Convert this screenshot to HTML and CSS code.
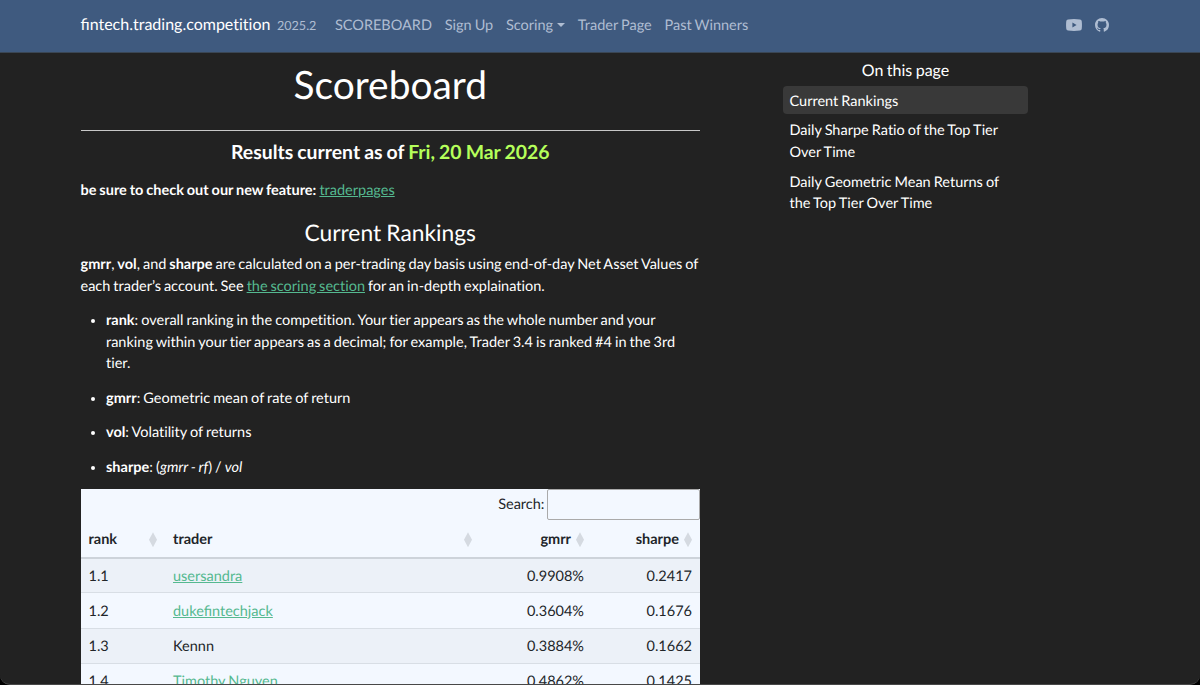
FILE: index.html
```html
<!DOCTYPE html>
<html lang="en">
<head>
<meta charset="utf-8">
<title>Scoreboard</title>
<link rel="stylesheet" href="styles.css">
</head>
<body>
<nav class="navbar">
  <a class="brand"><span class="liga">fintech</span>.trading.competition</a>
  <small class="version">2025.2</small>
  <ul class="nav">
    <li>SCOREBOARD</li>
    <li>Sign Up</li>
    <li>Scoring<span class="caret"></span></li>
    <li>Trader Page</li>
    <li>Past Winners</li>
  </ul>
  <div class="social">
    <svg width="16" height="12" viewBox="0 0 16 12"><path fill-rule="evenodd" d="M2 .4Q8-.2 14 .4Q15.5.6 15.7 2Q16.2 6 15.7 10Q15.5 11.4 14 11.6Q8 12.2 2 11.6Q.5 11.4.3 10Q-.2 6 .3 2Q.5.6 2 .4ZM6.4 3.6V8.4L10.6 6Z"/></svg>
    <svg width="14" height="14" viewBox="0 0 16 16"><path d="M8 0C3.58 0 0 3.58 0 8c0 3.54 2.29 6.53 5.47 7.59.4.07.55-.17.55-.38 0-.19-.01-.82-.01-1.49-2.01.37-2.53-.49-2.69-.94-.09-.23-.48-.94-.82-1.13-.28-.15-.68-.52-.01-.53.63-.01 1.08.58 1.23.82.72 1.21 1.87.87 2.33.66.07-.52.28-.87.51-1.07-1.78-.2-3.64-.89-3.64-3.95 0-.87.31-1.59.82-2.15-.08-.2-.36-1.02.08-2.12 0 0 .67-.21 2.2.82.64-.18 1.32-.27 2-.27s1.36.09 2 .27c1.53-1.04 2.2-.82 2.2-.82.44 1.1.16 1.92.08 2.12.51.56.82 1.27.82 2.15 0 3.07-1.87 3.75-3.65 3.95.29.25.54.73.54 1.48 0 1.07-.01 1.93-.01 2.2 0 .21.15.46.55.38A8.01 8.01 0 0 0 16 8c0-4.42-3.58-8-8-8Z"/></svg>
  </div>
</nav>
<div class="container">
  <main class="content">
    <h1>Scoreboard</h1>
    <h3>Results current as of <span class="date">Fri, 20 Mar 2026</span></h3>
    <p class="notice"><b>be sure to check out our new feature:</b> <a class="link">traderpages</a></p>
    <h2>Current Rankings</h2>
    <p class="intro"><b>gmrr</b>, <b>vol</b>, and <b>sharpe</b> are calculated on a per-trading day basis using end-of-day Net Asset Values of each trader’s account. See <a class="link">the scoring section</a> for an in-depth explaination.</p>
    <ul class="terms">
      <li><b>rank</b>: overall ranking in the competition. Your tier appears as the whole number and your ranking within your tier appears as a decimal; for example, Trader 3.4 is ranked #4 in the 3rd tier.</li>
      <li><b>gmrr</b>: Geometric mean of rate of return</li>
      <li><b>vol</b>: Volatility of returns</li>
      <li><b>sharpe</b>: (<em>gmrr - rf</em>) / <em>vol</em></li>
    </ul>
    <div class="datatable">
      <label class="search"><span>Search:</span><input type="search"></label>
      <table>
        <colgroup><col class="c-rank"><col class="c-trader"><col class="c-gmrr"><col></colgroup>
        <thead><tr>
          <th><div class="head">rank<i class="sort"></i></div></th>
          <th><div class="head">trader<i class="sort"></i></div></th>
          <th><div class="head num">gmrr<i class="sort"></i></div></th>
          <th><div class="head num">sharpe<i class="sort"></i></div></th>
        </tr></thead>
        <tbody>
          <tr><td>1.1</td><td><a class="link">usersandra</a></td><td class="num">0.9908%</td><td class="num">0.2417</td></tr>
          <tr><td>1.2</td><td><a class="link liga">dukefintechjack</a></td><td class="num">0.3604%</td><td class="num">0.1676</td></tr>
          <tr><td>1.3</td><td>Kennn</td><td class="num">0.3884%</td><td class="num">0.1662</td></tr>
          <tr><td>1.4</td><td><a class="link">Timothy Nguyen</a></td><td class="num">0.4862%</td><td class="num">0.1425</td></tr>
        </tbody>
      </table>
    </div>
  </main>
  <aside class="toc">
    <h2>On this page</h2>
    <a class="active">Current Rankings</a>
    <a>Daily Sharpe Ratio of the Top Tier Over Time</a>
    <a>Daily Geometric Mean Returns of the Top Tier Over Time</a>
  </aside>
</div>
</body>
</html>
```

FILE: styles.css
```css
* { box-sizing: border-box; }
html { background: #000; }
body {
  margin: 0;
  height: 685px;
  overflow: hidden;
  background: #222;
  border-bottom: 1px solid #484848;
  border-radius: 0 0 10px 10px;
  color: #fff;
  font: 14.5px/21.6px Lato, sans-serif;
  font-variant-ligatures: none;
  text-rendering: geometricPrecision;
  word-spacing: -0.65px;
}
.liga { font-variant-ligatures: normal; }
h1, h2, h3, p, ul { margin: 0; padding: 0; font-weight: 400; }
.navbar {
  display: flex;
  align-items: center;
  height: 53px;
  padding: 0 91px 3px 80.5px;
  background: #3f5a7f;
  border-bottom: 1px solid #3a4654;
  color: #afbdd2;
}
.brand { padding-top: 1px; color: #fff; font-size: 16px; }
.version { margin: 2px 0 0 6.5px; font-size: 12.6px; }
.nav { display: flex; gap: 12.7px; margin: 2px 0 0 18.5px; list-style: none; }
.caret {
  display: inline-block;
  margin-left: 4px;
  vertical-align: 3px;
  border: 4px solid transparent;
  border-top-color: currentColor;
  border-bottom: 0;
}
.social { display: flex; align-items: center; gap: 13px; margin-left: auto; fill: #afbdd2; }
.container { display: flex; padding-left: 80.5px; }
.content { width: 619.5px; }
.content h1 {
  height: 78px;
  padding-top: 9px;
  border-bottom: 1px solid #c8c8c8;
  font-size: 38.9px;
  line-height: 46px;
  text-align: center;
}
.content h3 { padding-top: 10px; font-size: 19.4px; line-height: 24px; font-weight: 700; text-align: center; }
.date { color: #b5ff5a; }
.link { color: #55b990; text-decoration: underline; }
.notice { padding-top: 15px; }
.content h2 { padding-top: 17.6px; font-size: 22.8px; line-height: 27px; text-align: center; }
.intro { padding-top: 8px; word-spacing: -0.78px; }
.terms { padding: 12.8px 0 10.6px 25.5px; }
.terms li + li { margin-top: 12.8px; }
.datatable { width: 619.5px; background: #f3f8ff; color: #212529; }
.search { display: flex; justify-content: flex-end; align-items: center; gap: 2.5px; height: 31px; }
.search span { padding-top: 2px; }
.search input { width: 153px; height: 31px; border: 1px solid #aaa; border-radius: 2px; background: transparent; }
table { width: 100%; table-layout: fixed; border-collapse: collapse; }
.c-rank { width: 84.5px; }
.c-trader { width: 315px; }
.c-gmrr { width: 112px; }
th { height: 38px; padding: 3px 8px 0; border-bottom: 2px solid #cdd3da; text-align: left; }
td { height: 35.2px; padding: 2px 8px 0; border-bottom: 1px solid #d8dee5; }
tbody tr:nth-child(odd) { background: #ecf1f8; }
.num { text-align: right; }
.head { display: flex; align-items: center; justify-content: space-between; }
.head.num { justify-content: flex-end; gap: 5px; }
.sort { width: 8px; height: 15px; background: #d5dae1; clip-path: polygon(50% 0, 100% 50%, 50% 100%, 0 50%); }
.toc { display: flex; flex-direction: column; gap: 2px; width: 245px; margin-left: 83px; }
.toc h2 { padding: 7px 0 2px; font-size: 16px; line-height: 22px; text-align: center; }
.toc a { padding: 4.6px 6.5px 1.5px; border-radius: 4px; }
.toc .active { background: #393939; }
```
